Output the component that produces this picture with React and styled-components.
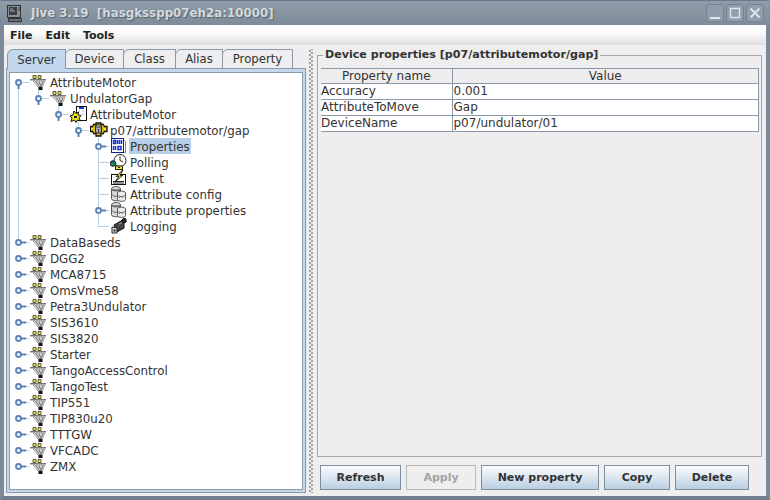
import React from "react"
import styled, { createGlobalStyle } from "styled-components"

const GlobalStyle = createGlobalStyle`
  html, body {
    margin: 0;
    padding: 0;
    width: 770px;
    height: 500px;
    overflow: hidden;
    background: #eeeeee;
  }
  * { box-sizing: border-box; }
`

const Frame = styled.div`
  width: 770px;
  height: 500px;
  display: flex;
  flex-direction: column;
  background: #eeeeee;
  font-family: "DejaVu Sans", sans-serif;
  font-size: 12px;
  color: #333333;
  border-top: 1px solid #6c7885;
  border-bottom: 4px solid #6f7d8c;
  border-left: 4px solid #7c8998;
  border-right: 4px solid #7c8998;
`

const TitleBar = styled.div`
  height: 24px;
  flex: none;
  margin: 0 -4px;
  display: flex;
  align-items: center;
  padding: 0 6px;
  background: linear-gradient(#8e9cab, #85939f 60%, #7e8c9b);
  color: #d3d9de;
  font-weight: bold;
  font-size: 11.85px;
  white-space: pre;
  text-shadow: 1px 1px 1px #55606c;
`

const TitleText = styled.span`
  margin-left: 8px;
  flex: 1;
`

const WinButton = styled.div`
  width: 18px;
  height: 18px;
  margin-left: 2px;
  border: 1px solid #75828f;
  border-radius: 3px;
  background: #909eac;
  display: flex;
  align-items: center;
  justify-content: center;
`

const MenuBar = styled.div`
  height: 20px;
  flex: none;
  display: flex;
  align-items: center;
  padding: 0 0 0 6px;
  gap: 13px;
  background: linear-gradient(#ffffff, #fafafa 40%, #dedede);
  font-weight: bold;
  font-size: 11px;
  color: #222222;
`

const Content = styled.div`
  flex: 1;
  min-height: 0;
  display: flex;
  padding: 4px 4px 0 2px;
`

const LeftPane = styled.div`
  width: 300px;
  flex: none;
  display: flex;
  flex-direction: column;
  padding-bottom: 3px;
`

const TabStrip = styled.div`
  height: 20px;
  flex: none;
  display: flex;
  padding-left: 1px;
  margin-bottom: -1px;
`

const Tab = styled.div`
  height: 20px;
  width: ${(p) => p.$width}px;
  display: flex;
  align-items: center;
  justify-content: center;
  margin-right: -1px;
  border: 1px solid #8a99a8;
  border-top-left-radius: 6px;
  border-bottom: ${(p) => (p.$active ? "none" : "1px solid #8a99a8")};
  background: ${(p) => (p.$active ? "#c3d8ec" : "#eeeeee")};
  color: #333333;
  font-size: 11.7px;
  position: relative;
  z-index: ${(p) => (p.$active ? 1 : 0)};
`

const TabBody = styled.div`
  flex: 1;
  min-height: 0;
  padding: 3px 2px 2px;
  background: #c3d8ec;
  border: 1px solid #8a99a8;
  display: flex;
`

const TreeBox = styled.div`
  flex: 1;
  background: #ffffff;
  border: 1px solid #8a99a8;
  padding-top: 1px;
  overflow: hidden;
`

const Row = styled.div`
  height: 16px;
  display: flex;
  align-items: center;
  white-space: pre;
`

const Gutter = styled.svg`
  flex: none;
  display: block;
`

const Label = styled.span`
  margin-left: 1px;
  padding: 0 1px;
  height: 16px;
  line-height: 18px;
  background: ${(p) => (p.$selected ? "#b8cfe5" : "transparent")};
  color: #333333;
  font-size: 11.8px;
`

const Divider = styled.div`
  width: 11px;
  flex: none;
  margin-bottom: 3px;
  background-image: radial-gradient(circle, #a0a0a0 0.7px, transparent 0.9px),
    radial-gradient(circle, #a0a0a0 0.7px, transparent 0.9px);
  background-size: 2px 4px, 2px 4px;
  background-repeat: repeat-y;
  background-position: 3px 0, 5px 2px;
`

const RightPane = styled.div`
  flex: 1;
  min-width: 0;
  display: flex;
  flex-direction: column;
`

const Group = styled.fieldset`
  flex: 1;
  min-height: 0;
  min-width: 0;
  margin: 0;
  padding: 7px 2px 0 3px;
  border: 1px solid #a6a6a6;
`

const GroupTitle = styled.legend`
  margin-left: 2px;
  padding: 0 2px;
  font-weight: bold;
  font-size: 11.1px;
  color: #333333;
  line-height: 12px;
`

const PropTable = styled.table`
  border-collapse: collapse;
  table-layout: fixed;
  width: 100%;
  font-size: 12px;
  color: #333333;
  background: #ffffff;
`

const HeadCell = styled.th`
  font-weight: normal;
  height: 15px;
  line-height: 14px;
  padding: 0;
  background: #eeeeee;
  border: 1px solid #8a99a8;
  border-left: ${(p) => (p.$first ? "none" : "1px solid #8a99a8")};
  width: ${(p) => p.$width || "auto"};
`

const Cell = styled.td`
  height: 16px;
  line-height: 15px;
  padding: 0 0 0 ${(p) => (p.$first ? 0 : 1)}px;
  border: 1px solid #8a99a8;
  border-left: ${(p) => (p.$first ? "none" : "1px solid #8a99a8")};
  white-space: nowrap;
`

const ButtonBar = styled.div`
  height: 39px;
  flex: none;
  display: flex;
  align-items: flex-start;
  padding: 8px 0 0 3px;
  gap: 5px;
`

const Button = styled.button`
  width: ${(p) => p.$width}px;
  height: 25px;
  padding: 0;
  font-family: "DejaVu Sans", sans-serif;
  font-weight: bold;
  font-size: 11px;
  border: 1px solid ${(p) => (p.disabled ? "#b8b8b8" : "#7e8fa0")};
  background: ${(p) =>
    p.disabled ? "#eeeeee" : "linear-gradient(#fbfcfd, #dfe8f1 45%, #b9cee2)"};
  color: ${(p) => (p.disabled ? "#a3a3a3" : "#333333")};
`

const LINE = "#b8cfe5"
const KNOB = "#5a80b8"

// guides: vertical lines passing through this row, x: column of this row's branch
const Connectors = ({ depth, handle, guides = [], down, up = true, expanded }) => {
  const x = 8 + depth * 20
  return (
    <Gutter width={x + 12} height="16" viewBox={`0 0 ${x + 12} 16`}>
      {guides.map((g) => (
        <line key={g} x1={g + 0.5} y1="0" x2={g + 0.5} y2="16" stroke={LINE} />
      ))}
      {up && <line x1={x + 0.5} y1="0" x2={x + 0.5} y2="8" stroke={LINE} />}
      {down && <line x1={x + 0.5} y1="8" x2={x + 0.5} y2="16" stroke={LINE} />}
      <line x1={x} y1="8.5" x2={x + 11} y2="8.5" stroke={LINE} />
      {handle && (
        <>
          {expanded ? (
            <line x1={x + 0.5} y1="10" x2={x + 0.5} y2="15" stroke={KNOB} strokeWidth="2" />
          ) : (
            <line x1={x + 3} y1="8.5" x2={x + 8} y2="8.5" stroke={KNOB} strokeWidth="2" />
          )}
          <circle cx={x + 0.5} cy="8.5" r="2.5" fill="#ffffff" stroke={KNOB} strokeWidth="1.8" />
        </>
      )}
    </Gutter>
  )
}

const ServerIcon = () => (
  <svg width="18" height="16" viewBox="0 0 18 16">
    <path d="M3 1.500h3v3H3zM8 1.500h3v3H8z" fill="#f4e41c" stroke="#333" strokeWidth="0.800" />
    <path d="M0 5.500h16" stroke="#777" />
    <path d="M0 6.500h16" stroke="#c4c4c4" />
    <path d="M3 7h12l-2.500 6h-4.500z" fill="#e0e0e0" stroke="#8a8a8a" strokeWidth="0.700" />
    <path d="M6 7.500l3.500 5M9 7.500l2 5M13 7.500l-2 5" stroke="#555" strokeWidth="0.900" />
    <path d="M8.500 13h4v3h-4z" fill="#111" />
  </svg>
)

const ClassIcon = () => (
  <svg width="18" height="17" viewBox="0 0 18 17">
    <rect x="6.500" y="0.500" width="10" height="14" fill="#fff" stroke="#111" />
    <path d="M9 2h5" stroke="#1c38d0" strokeWidth="2" />
    <path d="M9 5h1M12 5h2M12 8h2" stroke="#9ab" />
    <path d="M4 5l2 2.500L8.500 6 8 9l3 .5L9 12l1.500 3L7.500 14 6 16.500 4.500 14 1 15.500 2 12 0 10l3-1z" fill="#f0e81c" stroke="#111" />
    <path d="M4 10h3v2H4z" fill="#222" />
  </svg>
)

const DeviceIcon = () => (
  <svg width="18" height="16" viewBox="0 0 18 16">
    <path
      d="M6 1h5v2l2-1 1.500 2.500H17v5h-2.500L13 12l-2-1v3H6v-3l-2 1-1.500-2.500H.5v-5h2L4 2l2 1z"
      fill="#d8c010"
      stroke="#111"
      strokeWidth="1.300"
    />
    <path d="M5.500 4c0-1.500 6-1.500 6 0v6c0 1.500-6 1.500-6 0z" fill="#a8a8a8" stroke="#222" />
    <path d="M5.500 4c0 1.500 6 1.500 6 0" fill="#e4e4e4" stroke="#222" />
    <path d="M8.500 7v4" stroke="#444" />
    <path d="M2 6v2M15 6v2" stroke="#f6ea30" strokeWidth="1.500" />
  </svg>
)

const PropertiesIcon = () => (
  <svg width="18" height="16" viewBox="0 0 18 16">
    <path d="M12 .5l3.500 3v11h-3" fill="#fff" stroke="#888" />
    <rect x="1.500" y="0.500" width="12" height="14" fill="#fff" stroke="#14208a" />
    <path
      d="M3.500 2.500h2v3h-2zM7.500 2v4M9.500 2v4M11.500 2v4M3.500 8v4M5.500 8v4M8 8.500h3v3H8z"
      fill="none"
      stroke="#1430d8"
      strokeWidth="1.500"
    />
  </svg>
)

const PollingIcon = () => (
  <svg width="18" height="16" viewBox="0 0 18 16">
    <circle cx="10" cy="6.500" r="6" fill="#fff" stroke="#222" />
    <path d="M10 2.500v4l3 1.500" fill="none" stroke="#222" />
    <circle cx="3" cy="9.500" r="2.800" fill="#2a9a30" stroke="#113" />
    <path d="M1.500 8.500h3" stroke="#1c40d0" strokeWidth="1.500" />
    <rect x="5.500" y="12" width="7" height="3.500" fill="#f0e020" stroke="#222" />
    <path d="M8 13.500h2" stroke="#222" />
  </svg>
)

const EventIcon = () => (
  <svg width="18" height="16" viewBox="0 0 18 16">
    <rect x="1.500" y="4.500" width="14" height="10" fill="#fff" stroke="#111" />
    <path d="M3 11.500h11M3 13h11" stroke="#222" />
    <path d="M12.500 0L6 6.500l3-.5-4 6 8-7-3 .5 3-5.500z" fill="#f6e41c" stroke="#111" strokeWidth="0.900" />
  </svg>
)

const DbIcon = () => (
  <svg width="18" height="16" viewBox="0 0 18 16">
    <path d="M1.500 3c0-3.300 9-3.300 9 0v9.500c0 3-9 3-9 0z" fill="#d8d8d8" stroke="#555" />
    <path d="M1.500 3c0 2.500 9 2.500 9 0" fill="#8c8c8c" stroke="#555" />
    <path d="M7.500 7c0-2.500 8-2.500 8 0v6.500c0 2.500-8 2.500-8 0z" fill="#ececec" stroke="#555" />
    <path d="M1.500 8c1 2 4 3 6 2M7.500 9c2 2 6 2 8 0M9 12l2-2 2 2" fill="none" stroke="#666" />
  </svg>
)

const LoggingIcon = () => (
  <svg width="18" height="16" viewBox="0 0 18 16">
    <path d="M4 7l7-4 3 2v5l-7 4z" fill="#444" stroke="#111" />
    <path d="M2 9l5 1v5H2z" fill="#e8e8e8" stroke="#222" />
    <path d="M11 3l3-3 2 1v3l-2 1z" fill="#222" stroke="#111" />
    <circle cx="4.500" cy="12.500" r="1.200" fill="#333" />
    <path d="M14.500 1.500h1" stroke="#c02020" />
    <path d="M9 6l3-1.500" stroke="#aaa" />
  </svg>
)

const icons = {
  server: ServerIcon,
  class: ClassIcon,
  device: DeviceIcon,
  props: PropertiesIcon,
  polling: PollingIcon,
  event: EventIcon,
  db: DbIcon,
  logging: LoggingIcon,
}

const trunk = [8]

const rows = [
  { depth: 0, icon: "server", text: "AttributeMotor", handle: true, expanded: true, up: false, down: true },
  { depth: 1, icon: "server", text: "UndulatorGap", handle: true, expanded: true, guides: trunk },
  { depth: 2, icon: "class", text: "AttributeMotor", handle: true, expanded: true, guides: trunk },
  { depth: 3, icon: "device", text: "p07/attributemotor/gap", handle: true, expanded: true, guides: trunk },
  { depth: 4, icon: "props", text: "Properties", handle: true, down: true, selected: true, guides: trunk },
  { depth: 4, icon: "polling", text: "Polling", down: true, guides: trunk },
  { depth: 4, icon: "event", text: "Event", down: true, guides: trunk },
  { depth: 4, icon: "db", text: "Attribute config", down: true, guides: trunk },
  { depth: 4, icon: "db", text: "Attribute properties", handle: true, down: true, guides: trunk },
  { depth: 4, icon: "logging", text: "Logging", guides: trunk },
  { depth: 0, icon: "server", text: "DataBaseds", handle: true },
  ...[
    "DGG2",
    "MCA8715",
    "OmsVme58",
    "Petra3Undulator",
    "SIS3610",
    "SIS3820",
    "Starter",
    "TangoAccessControl",
    "TangoTest",
    "TIP551",
    "TIP830u20",
    "TTTGW",
    "VFCADC",
    "ZMX",
  ].map((text) => ({ depth: 0, icon: "server", text, handle: true, up: false })),
]

const tabs = [
  { name: "Server", width: 59, active: true },
  { name: "Device", width: 59 },
  { name: "Class", width: 53 },
  { name: "Alias", width: 48 },
  { name: "Property", width: 71 },
]

const properties = [
  ["Accuracy", "0.001"],
  ["AttributeToMove", "Gap"],
  ["DeviceName", "p07/undulator/01"],
]

const buttons = [
  { name: "Refresh", width: 81 },
  { name: "Apply", width: 70, disabled: true },
  { name: "New property", width: 118 },
  { name: "Copy", width: 66 },
  { name: "Delete", width: 74 },
]

const TerminalIcon = () => (
  <svg width="17" height="17" viewBox="0 0 17 17">
    <rect x="1.500" y="0.500" width="13" height="12" fill="#8a9095" stroke="#333" />
    <rect x="3" y="2" width="8" height="8" fill="#3c4044" />
    <path d="M4 4h3M4 6h5" stroke="#aab" />
    <path d="M12 3h2M12 5h2" stroke="#444" />
    <path d="M2.500 13.500h13v3h-13z" fill="#6a7075" stroke="#333" />
  </svg>
)

export default function App() {
  return (
    <Frame>
      <GlobalStyle />
      <TitleBar>
        <TerminalIcon />
        <TitleText>Jive 3.19  [hasgksspp07eh2a:10000]</TitleText>
        <WinButton>
          <svg width="14" height="14" viewBox="0 0 14 14">
            <path d="M2 12h10" stroke="#dfe4e9" strokeWidth="2" />
          </svg>
        </WinButton>
        <WinButton>
          <svg width="14" height="14" viewBox="0 0 14 14">
            <rect x="2.500" y="2.500" width="9" height="9" fill="none" stroke="#dfe4e9" strokeWidth="1.500" />
          </svg>
        </WinButton>
        <WinButton>
          <svg width="14" height="14" viewBox="0 0 14 14">
            <path d="M2.500 2.500l9 9M11.500 2.500l-9 9" stroke="#dfe4e9" strokeWidth="2" />
          </svg>
        </WinButton>
      </TitleBar>
      <MenuBar>
        <span>File</span>
        <span>Edit</span>
        <span>Tools</span>
      </MenuBar>
      <Content>
        <LeftPane>
          <TabStrip>
            {tabs.map((t) => (
              <Tab key={t.name} $active={t.active} $width={t.width}>
                {t.name}
              </Tab>
            ))}
          </TabStrip>
          <TabBody>
            <TreeBox>
              {rows.map((r) => {
                const Icon = icons[r.icon]
                return (
                  <Row key={r.depth + r.text}>
                    <Connectors {...r} />
                    <Icon />
                    <Label $selected={r.selected}>{r.text}</Label>
                  </Row>
                )
              })}
            </TreeBox>
          </TabBody>
        </LeftPane>
        <Divider />
        <RightPane>
          <Group>
            <GroupTitle>Device properties [p07/attributemotor/gap]</GroupTitle>
            <PropTable>
              <thead>
                <tr>
                  <HeadCell $first $width="131px">Property name</HeadCell>
                  <HeadCell>Value</HeadCell>
                </tr>
              </thead>
              <tbody>
                {properties.map(([k, v]) => (
                  <tr key={k}>
                    <Cell $first>{k}</Cell>
                    <Cell>{v}</Cell>
                  </tr>
                ))}
              </tbody>
            </PropTable>
          </Group>
          <ButtonBar>
            {buttons.map((b) => (
              <Button key={b.name} $width={b.width} disabled={b.disabled}>
                {b.name}
              </Button>
            ))}
          </ButtonBar>
        </RightPane>
      </Content>
    </Frame>
  )
}
